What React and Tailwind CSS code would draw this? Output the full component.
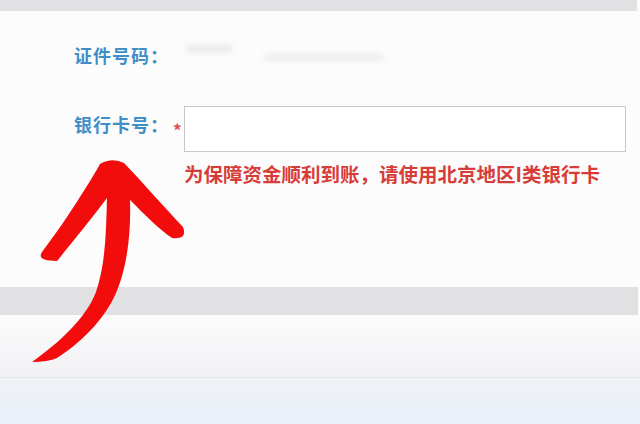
export default function App() {
  return (
    <div
      className="relative h-[424px] w-[640px] overflow-hidden bg-[#fcfcfd]"
      style={{ fontFamily: '"Noto Sans CJK SC", "Noto Sans", sans-serif' }}
    >
      <div className="mr-[3px] h-[11px] bg-[#e1e1e3]" />

      <div className="pl-[74px]">
        <div className="mt-[33px] flex h-[22px] items-center">
          <span className="w-[110px] text-[18px] leading-[22px] font-bold tracking-[1px] text-[#3f8ec6]">证件号码：</span>
          <div className="relative h-[22px] w-[220px]">
            <div className="absolute left-[2px] top-[2px] h-[5px] w-[46px] rounded-full bg-[#e0e0e4] blur-[3px]" />
            <div className="absolute left-[80px] top-[11px] h-[5px] w-[120px] rounded-full bg-[#e6e6ea] blur-[3px]" />
          </div>
        </div>

        <div className="mt-[40px] flex">
          <span className="w-[99px] pt-[7px] text-[18px] leading-[22px] font-bold tracking-[1px] text-[#3f8ec6]">银行卡号：</span>
          <span className="w-[11px] pt-[15px] text-[17px] leading-[17px] font-bold text-[#e3504c]">*</span>
          <div className="h-[46px] w-[442px] border border-[#c9c9cc] bg-white" />
        </div>

        <p className="mt-[10px] ml-[110px] text-[19.5px] leading-[24px] font-bold text-[#d73d38]">
          为保障资金顺利到账，请使用北京地区I类银行卡
        </p>
      </div>

      <div className="mt-[101px] mr-[2px] h-[28px] bg-[#e1e0e3]" />
      <div className="h-[62px] bg-gradient-to-b from-[#fcfcfd] to-[#f1f1f4]" />
      <div className="h-px bg-[#e4e4e9]" />
      <div className="h-[50px] bg-gradient-to-b from-[#eff1f6] to-[#eaf0f9]" />

      <svg className="pointer-events-none absolute inset-0" width="640" height="424" viewBox="0 0 640 424">
        <path
          d="M100 164 C90 182 65 222 42 252 Q36 261 57 261 C70 245 92 218 107 198 C106 230 106 262 96 292 C86 318 60 342 32 362 Q48 362 57 358 C85 340 108 315 118 288 C128 262 131 230 130 200 C145 215 160 230 172 238 Q188 240 183 227 C165 208 145 185 124 163 Q112 157 100 164 Z"
          fill="#f20c0c"
        />
      </svg>
    </div>
  )
}
